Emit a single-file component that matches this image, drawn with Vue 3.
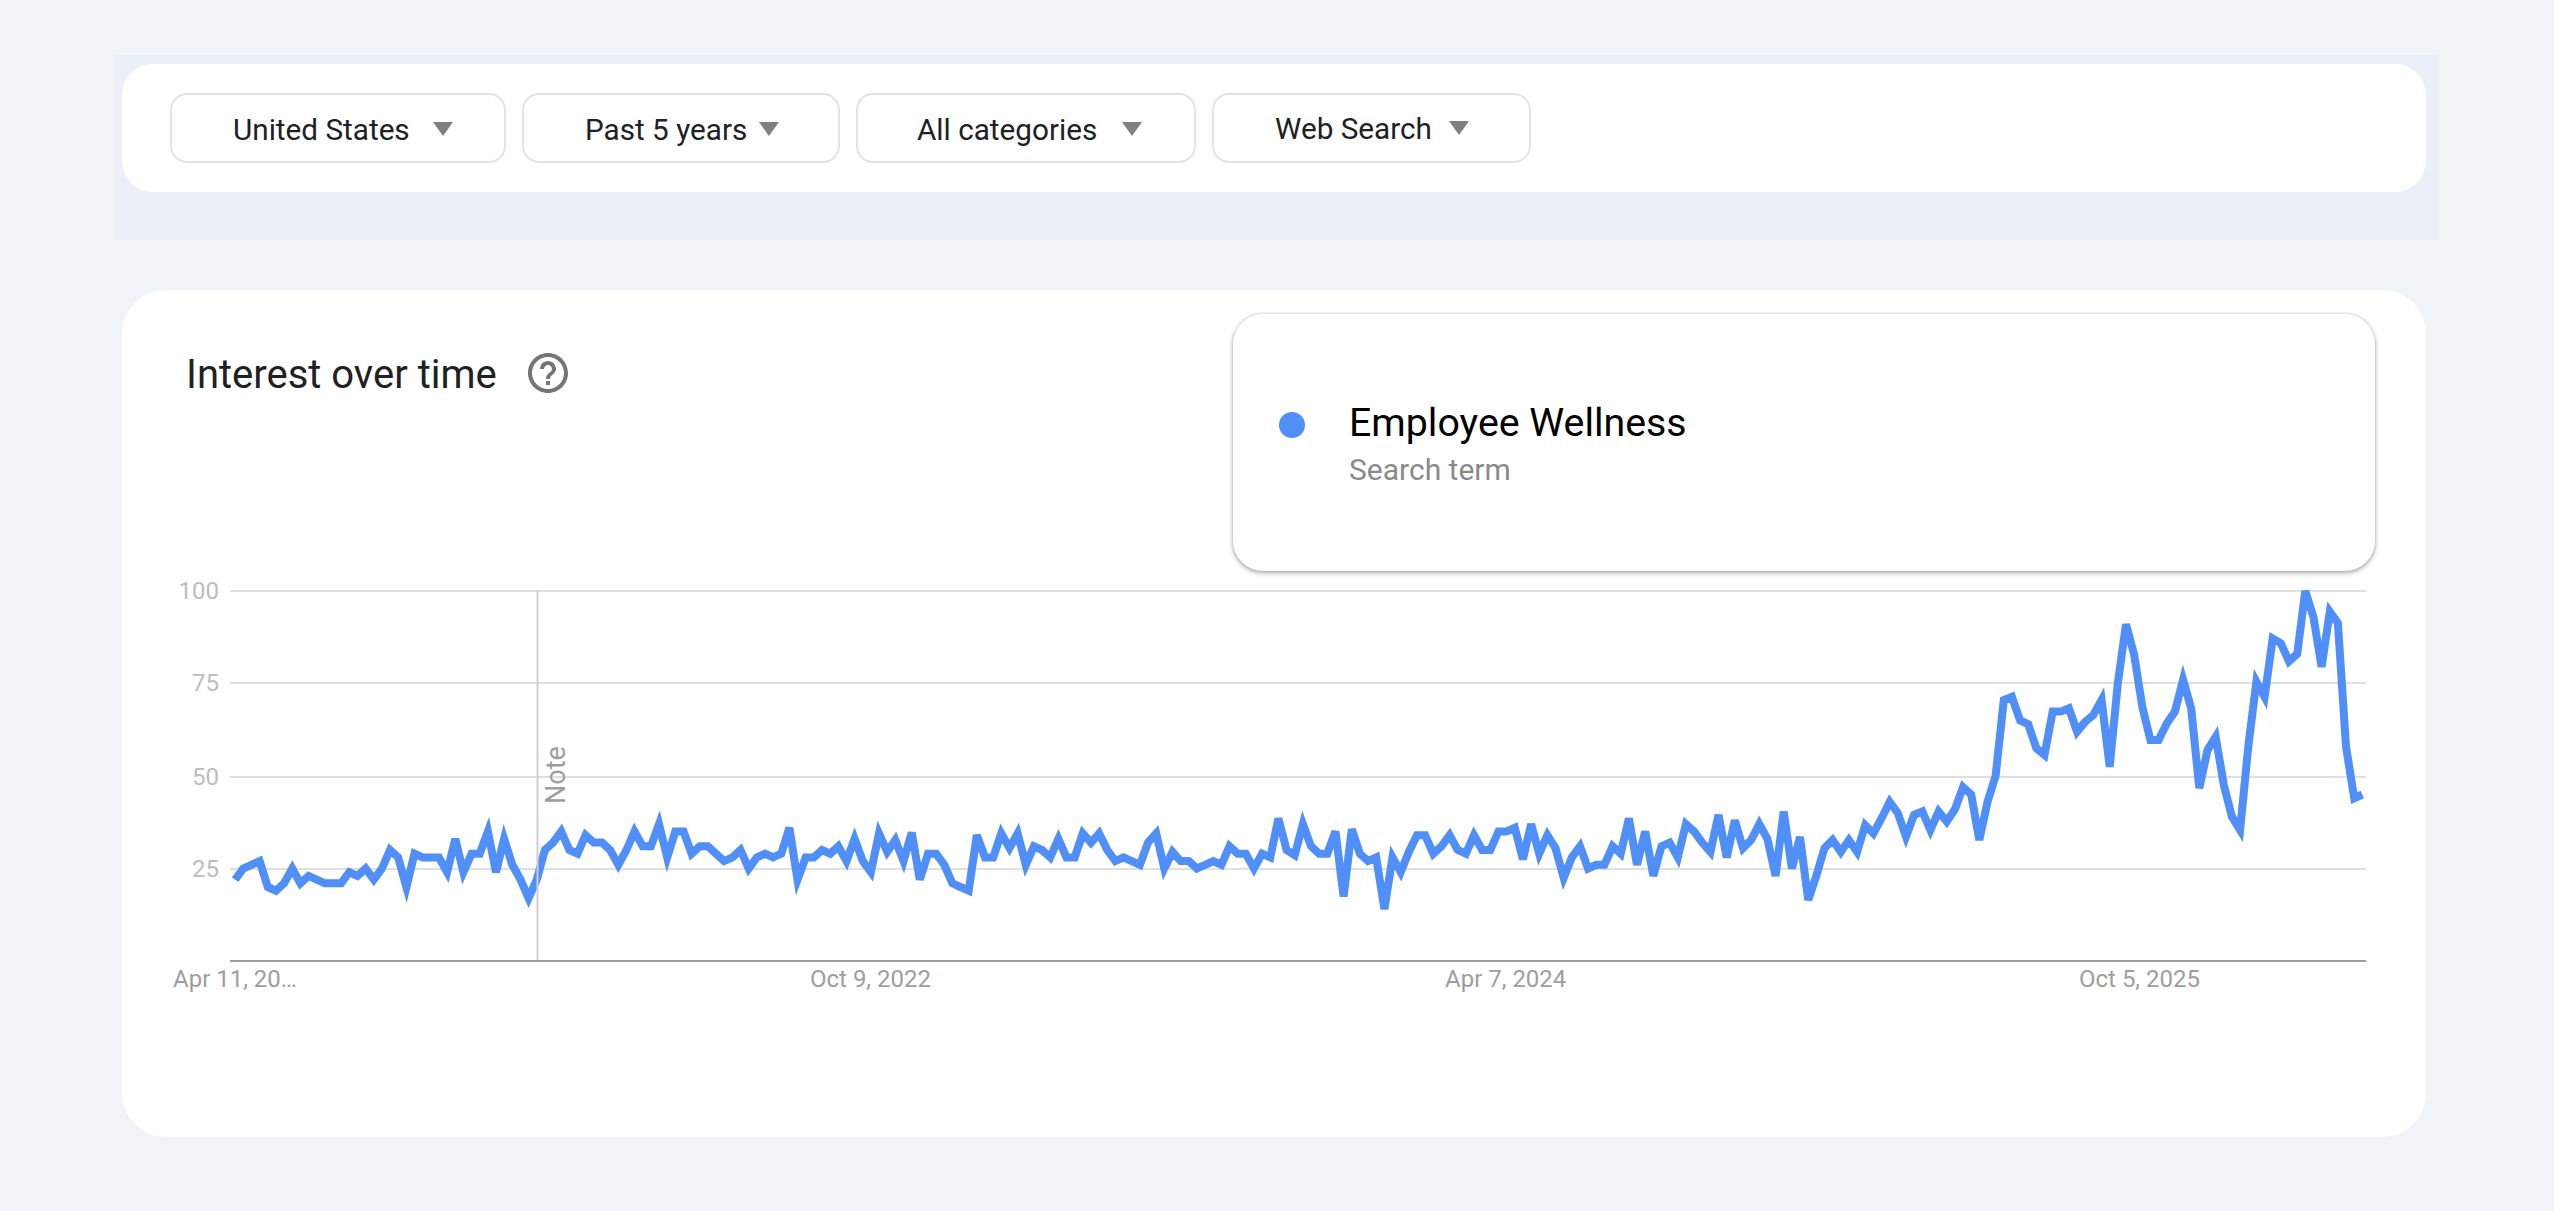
<script setup>
const filters = ['United States', 'Past 5 years', 'All categories', 'Web Search']
const values = [
22,25,26,27,20,19,21,25,21,23,22,21,21,21,24,23,25,22,25,30,28,20,29,28,28,28,24,33,24,29,29,35,24,33,26,22,17,22,30,32,
35,30,29,34,32,32,30,26,30,35,31,31,37,28,35,35,29,31,31,29,27,28,30,25,28,29,28,29,36,22,28,28,30,29,31,27,33,27,24,34.5,
29.5,32.7,27,34.7,22,29,29,26,21,20,19,34,28,28,34.5,30.5,34.5,26,31,30,28,33,28,28,34.5,32,34.5,30,27,28,27,26,32,34.5,25,29.5,
27,27,25,26,27,26,31,29,29,25,29,28,38.5,30,28.6,37,31,29,29,35,17.4,35.6,29,27,28,14,28,24,29.5,34,34,29,31,34,30,29,34,30,
30,35,35,36,27.5,37,29,34,30.5,22.5,28,31,25,26,26,31,29,38.5,26,35,23,31,32,28,37,35,32,29.5,39.5,28,38,30.5,32.7,37,33,23,
40.4,25,33.5,16.5,23,30.5,32.7,29.5,32.7,29.5,36.7,34.5,38.5,43,40,33.6,39.5,40.4,35.4,40.4,37.7,41,47,45,32.7,43,50,70.5,71.4,65,64,57.5,55.7,67.4,67.4,68.3,62,64.7,66.5,70.5,
52.5,75,91,82.7,68.7,59.7,59.7,64.2,67.4,76,68.3,46.7,57,60.6,47.6,39,35.4,58,75.5,71.4,87.2,85.9,81,83,100,93,79.5,94.4,91.3,58,44,45
]
const points = values.map((v, i) => `${(235.2 + 8.15 * i).toFixed(1)},${(961 - 3.7 * v).toFixed(1)}`).join(' ')
const grid = [
  { label: '100', y: 591 },
  { label: '75', y: 683 },
  { label: '50', y: 777 },
  { label: '25', y: 869 }
]
const dates = [
  { label: 'Apr 11, 20…', x: 173 },
  { label: 'Oct 9, 2022', x: 810 },
  { label: 'Apr 7, 2024', x: 1445 },
  { label: 'Oct 5, 2025', x: 2079 }
]
</script>

<template>
  <main class="page">
    <section class="band">
      <div class="panel">
        <button v-for="f in filters" :key="f" class="filter">
          <span class="label">{{ f }}</span>
          <i class="caret"></i>
        </button>
      </div>
    </section>
    <section class="card">
      <header class="head">
        <div class="title-row">
          <h2 class="title">Interest over time</h2>
          <svg class="help" viewBox="0 0 24 24" width="48" height="48">
            <path fill="#757575" d="M11 18h2v-2h-2v2zm1-16C6.48 2 2 6.48 2 12s4.48 10 10 10 10-4.48 10-10S17.52 2 12 2zm0 18c-4.41 0-8-3.59-8-8s3.59-8 8-8 8 3.59 8 8-3.59 8-8 8zm0-14c-2.21 0-4 1.79-4 4h2c0-1.1.9-2 2-2s2 .9 2 2c0 2-3 1.75-3 5h2c0-2.25 3-2.5 3-5 0-2.21-1.79-4-4-4z"/>
          </svg>
        </div>
        <div class="legend">
          <span class="dot"></span>
          <div>
            <div class="term">Employee Wellness</div>
            <div class="sub">Search term</div>
          </div>
        </div>
      </header>
      <svg class="chart" viewBox="122 571 2304 440" width="2304" height="440">
        <defs>
          <clipPath id="plot"><rect x="230" y="590" width="2136" height="372" /></clipPath>
        </defs>
        <g v-for="g in grid" :key="g.label">
          <line x1="230" x2="2366" :y1="g.y" :y2="g.y" class="gridline" />
          <text x="219" :y="g.y + 8" text-anchor="end" class="ylabel">{{ g.label }}</text>
        </g>
        <polyline :points="points" class="trend" clip-path="url(#plot)" />
        <line x1="537.5" x2="537.5" y1="591" y2="961" class="noteline" />
        <line x1="230" x2="2366" y1="961" y2="961" class="axis" />
        <text class="note" transform="rotate(-90 565 804)" x="565" y="804">Note</text>
        <text v-for="d in dates" :key="d.label" :x="d.x" y="987" class="xlabel">{{ d.label }}</text>
      </svg>
    </section>
  </main>
</template>

<style>
html, body { margin: 0; background: #f0f4f9; }
</style>

<style scoped>
.page {
  box-sizing: border-box;
  width: 2554px;
  height: 1211px;
  padding-top: 55px;
  background: #f0f4f9;
  font-family: Roboto, "Liberation Sans", sans-serif;
  overflow: hidden;
}
.band {
  box-sizing: border-box;
  width: 2323px;
  height: 185px;
  margin-left: 115px;
  padding: 9px 12px 48px 7px;
  background: #ebf0f8;
}
.panel {
  display: flex;
  align-items: center;
  gap: 16px;
  height: 128px;
  padding-left: 48px;
  background: #fff;
  border-radius: 31px;
}
.filter {
  box-sizing: border-box;
  display: flex;
  align-items: center;
  height: 70px;
  padding: 0 0 0 61px;
  background: #fff;
  border: 2px solid #e3e3e3;
  border-radius: 17px;
  color: #202124;
  font: 400 29.7px Roboto, sans-serif;
}
.label { position: relative; top: 1px; }
.filter:nth-child(1) { width: 336px; }
.filter:nth-child(2) { width: 318px; }
.filter:nth-child(3) { width: 340px; padding-left: 59px; }
.filter:nth-child(4) { width: 319px; }
.filter:nth-child(4) .label { top: 0; }
.caret {
  width: 0;
  height: 0;
  margin: 2px 0 0 23px;
  border-left: 10.5px solid transparent;
  border-right: 10.5px solid transparent;
  border-top: 14px solid #808080;
}
.filter:nth-child(2) .caret { margin-left: 12px; }
.filter:nth-child(3) .caret { margin-left: 25px; }
.filter:nth-child(4) .caret { margin: 0 0 0 17px; }
.card {
  width: 2304px;
  height: 847px;
  margin: 50px 0 0 122px;
  background: #fff;
  border-radius: 44px;
}
.head {
  display: flex;
  justify-content: space-between;
  align-items: flex-start;
  height: 281px;
  padding: 24px 51px 0 64px;
  box-sizing: border-box;
}
.title-row {
  display: flex;
  align-items: center;
  gap: 27px;
  margin-top: 38px;
}
.title {
  margin: 0;
  font: 400 40px/46px Roboto, sans-serif;
  color: #202124;
}
.help { margin-top: -4px; }
.legend {
  box-sizing: border-box;
  display: flex;
  align-items: flex-start;
  gap: 44px;
  width: 1142px;
  height: 257px;
  padding: 86px 0 0 46px;
  background: #fff;
  border-radius: 30px;
  box-shadow: 0 2px 5px rgba(60, 64, 67, 0.42), 0 0 3px rgba(60, 64, 67, 0.2);
}
.dot {
  width: 26px;
  height: 26px;
  margin-top: 12px;
  border-radius: 50%;
  background: #4f8ff7;
}
.term { font-size: 39.3px; line-height: 46px; color: #000; }
.sub { margin-top: 6px; font-size: 30px; line-height: 36px; color: #8a8a8a; }
.chart { display: block; }
.gridline { stroke: #e0e0e0; stroke-width: 2; }
.noteline { stroke: #cfcfcf; stroke-width: 2; }
.axis { stroke: #9e9e9e; stroke-width: 2; }
.trend { fill: none; stroke: #4f8ff7; stroke-width: 8; stroke-linejoin: miter; stroke-miterlimit: 4; }
.ylabel { font: 400 24px Roboto, sans-serif; fill: #bdbdbd; }
.xlabel { font: 400 24px Roboto, sans-serif; fill: #9e9e9e; }
.note { font: 400 27px Roboto, sans-serif; fill: #9e9e9e; }
</style>
